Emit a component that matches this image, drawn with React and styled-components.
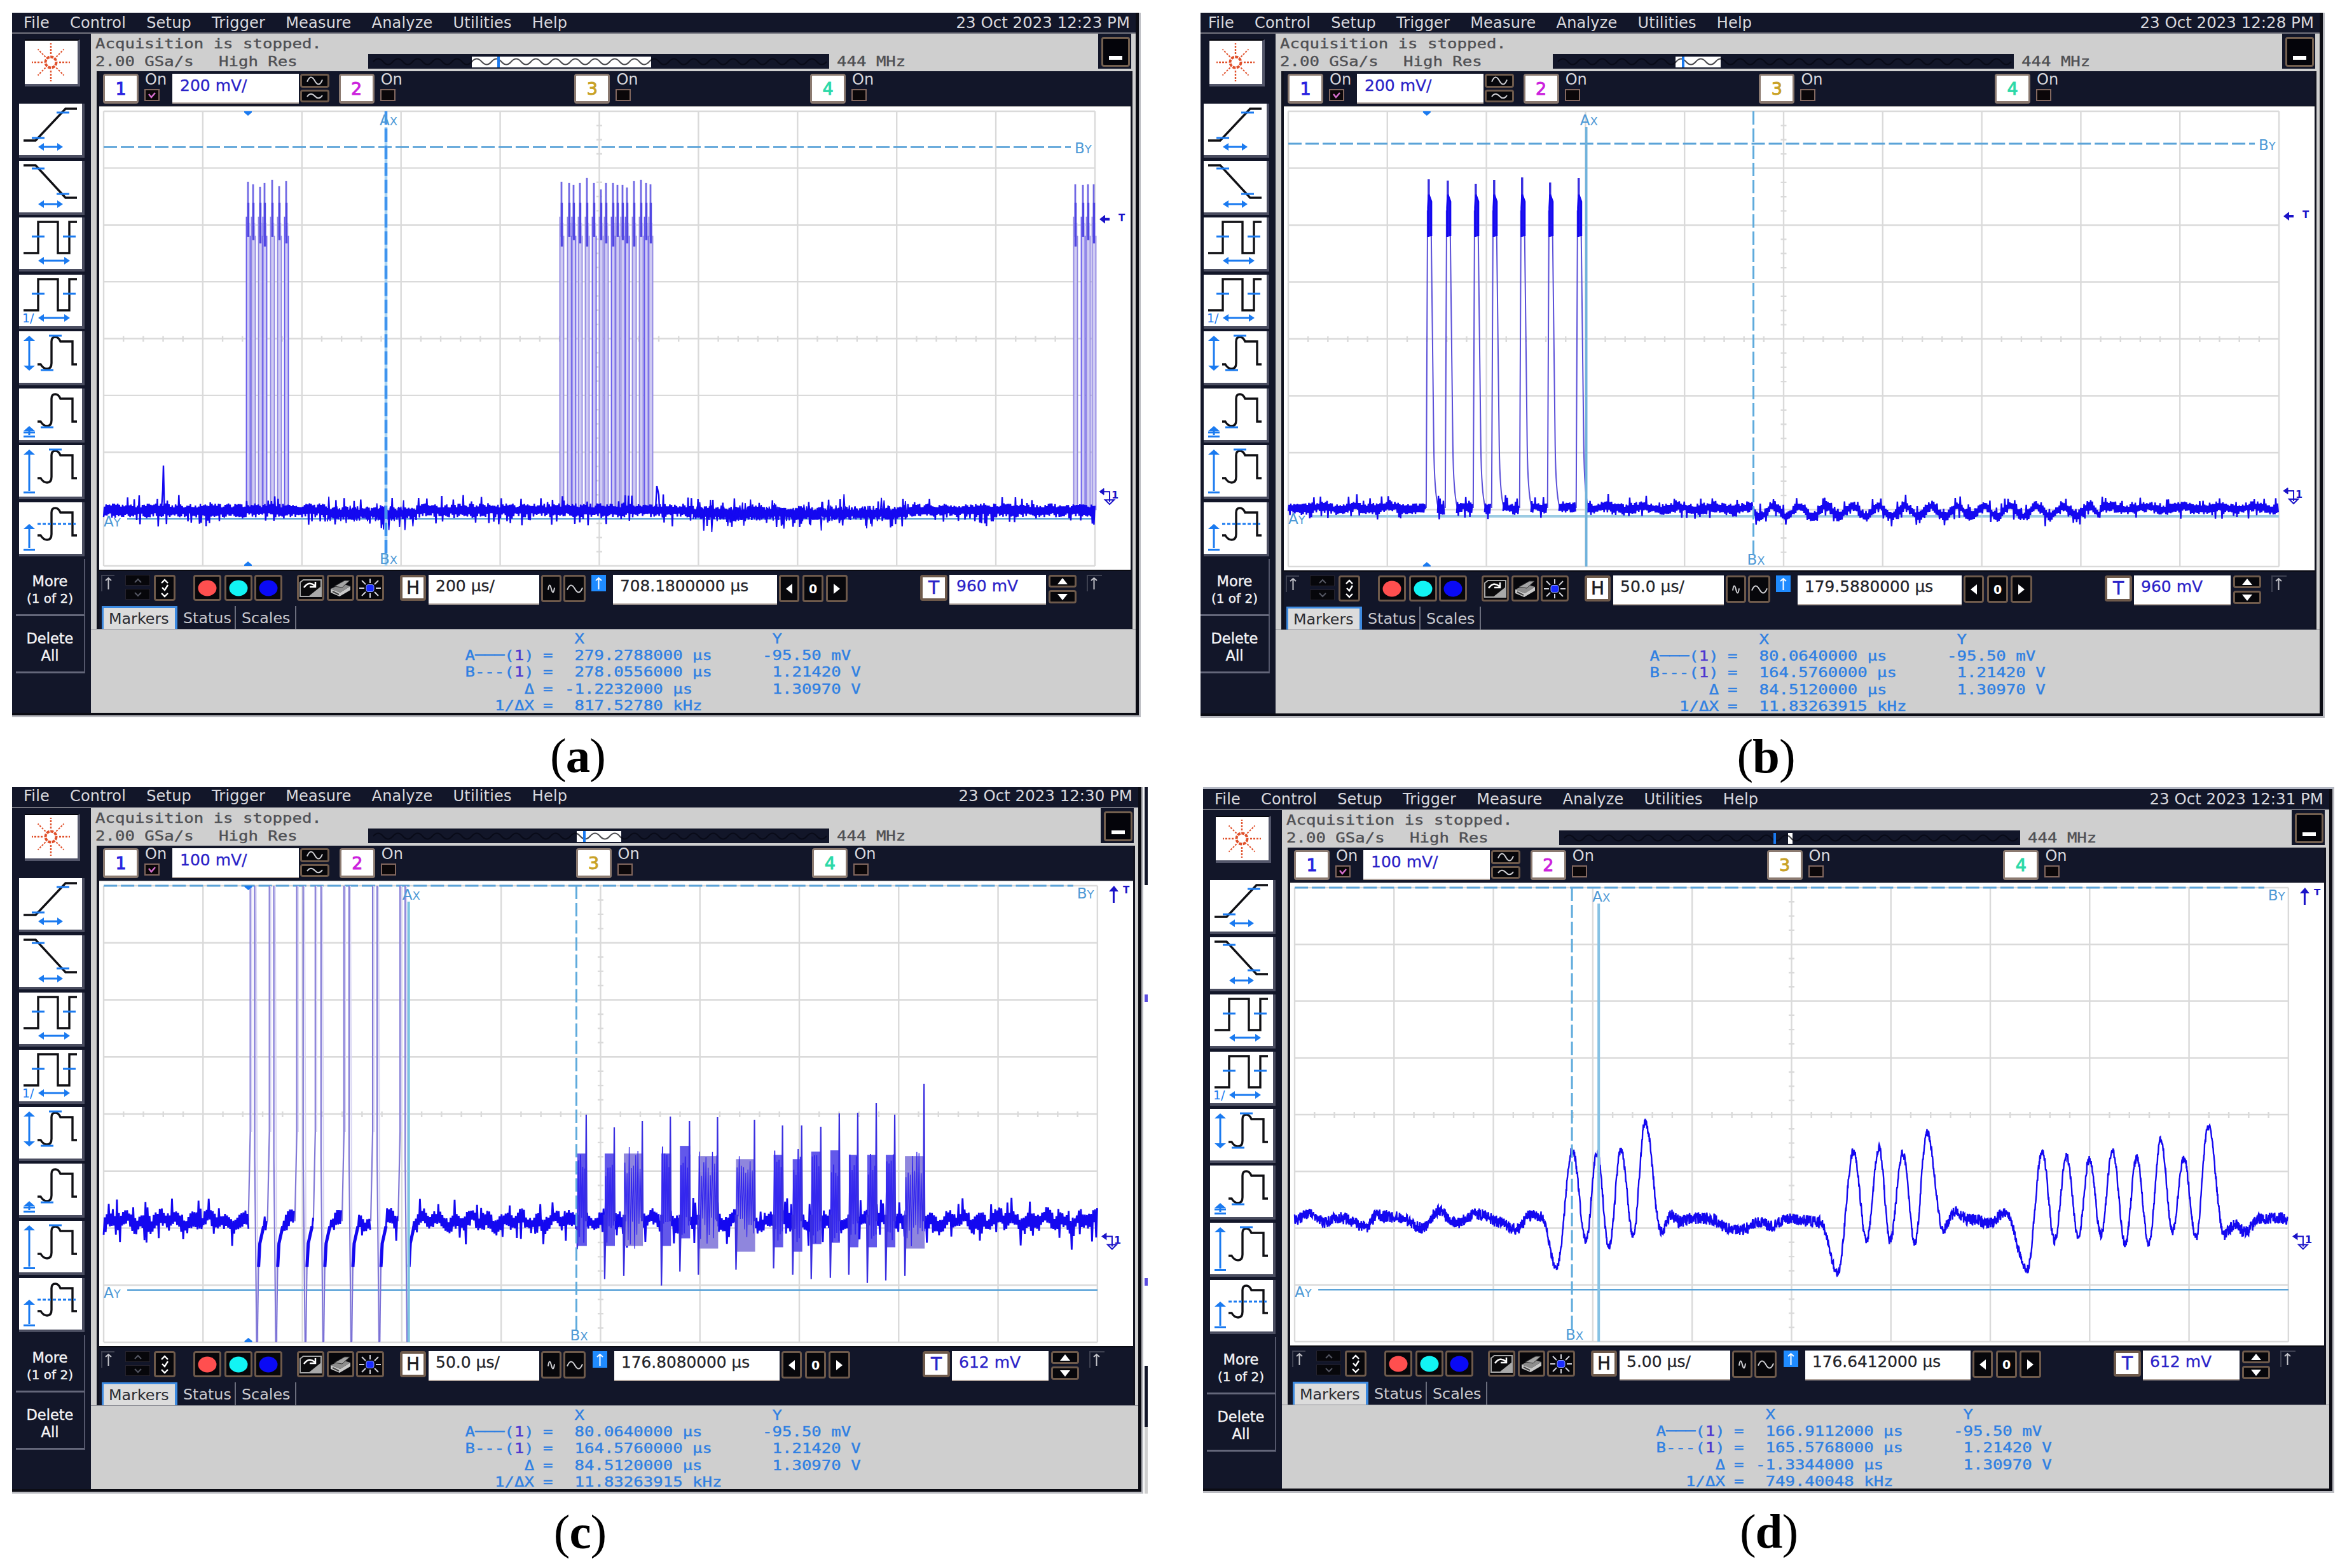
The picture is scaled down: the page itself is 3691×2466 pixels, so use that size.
import React from 'react'
import styled, { createGlobalStyle } from 'styled-components'

const NAVY = '#121629'
const GREY = '#cfcfcf'
const BLUE = '#1a7af0'
const TRACE = '#1408f0'

const GlobalStyle = createGlobalStyle`
  body {
    margin: 0;
    background: #fff;
  }
  * {
    box-sizing: border-box;
  }
`

const Page = styled.div`
  width: 3691px;
  height: 2466px;
  padding: 20px 0 0 19px;
  overflow: hidden;
  font-family: 'DejaVu Sans', Verdana, sans-serif;
`

const FigureRow = styled.div`
  display: flex;
  height: ${props => props.height}px;
`

const Figure = styled.div`
  width: ${props => props.width}px;
  margin-right: ${props => props.gap || 0}px;
`

const Caption = styled.div`
  padding-left: ${props => props.shift || 0}px;
  margin-top: 15px;
  text-align: center;
  font-family: 'Liberation Serif', 'Times New Roman', serif;
  font-size: 77px;
  line-height: 90px;
  letter-spacing: -1px;
  color: #000;
`

const ScreenRow = styled.div`
  display: flex;
  height: ${props => props.height}px;
`

const Screen = styled.div`
  width: ${props => props.width}px;
  height: 100%;
  border-right: 3px solid #b9bac0;
  border-bottom: 3px solid #b9bac0;
  border-top: ${props => (props.framed ? '3px solid #b4b8c4' : 'none')};
`

const Inner = styled.div`
  display: flex;
  flex-direction: column;
  height: 100%;
  border-right: 5px solid #0b0c14;
  border-bottom: 4px solid #0b0c14;
`

const MenuBar = styled.div`
  display: flex;
  align-items: center;
  justify-content: space-between;
  flex: none;
  height: 33px;
  padding: 0 9px ${props => props.lift || 0}px ${props => props.left}px;
  background: ${NAVY};
  border-bottom: 2px solid #74757f;
  color: #d9d9de;
  font-size: 24px;
  line-height: 28px;
  white-space: nowrap;
`

const Menus = styled.div`
  display: flex;
  gap: 32px;
  letter-spacing: 0.2px;
`

const Clock = styled.div`
  font-size: 24.5px;
`

const Body = styled.div`
  display: flex;
  flex: 1;
  min-height: 0;
`

const Sidebar = styled.div`
  display: flex;
  flex-direction: column;
  align-items: flex-end;
  flex: none;
  width: ${props => props.width}px;
  padding: 9px 9px 0 0;
  background: ${NAVY};
`

const LogoButton = styled.div`
  width: 87px;
  height: 74px;
  margin: 0 8px 27px 0;
  background: #fff;
  border-right: 4px solid #53566a;
  border-bottom: 4px solid #53566a;
  border-top: 2px solid #05060c;
`

const ToolButton = styled.div`
  width: 103px;
  height: 85px;
  margin: 0 1px ${props => (props.roomy ? 4.9 : 4.5)}px 0;
  background: #fff;
  border-right: 4px solid #4a4d60;
  border-bottom: 4px solid #4a4d60;
  flex: none;
`

const SideButton = styled.div`
  display: flex;
  flex-direction: column;
  align-items: center;
  justify-content: center;
  flex: none;
  width: 109px;
  height: 90px;
  padding-top: 10px;
  border-right: 2px solid #53566a;
  border-bottom: 3px solid #64677a;
  color: #f4f4f6;
  font-size: 22.5px;
  line-height: 27px;
  -webkit-text-stroke: 0.4px #f4f4f6;
`

const SmallText = styled.span`
  font-size: 20px;
`

const Main = styled.div`
  display: flex;
  flex-direction: column;
  flex: 1;
  min-width: 0;
  background: ${GREY};
`

const StatusArea = styled.div`
  display: flex;
  flex: none;
  height: 59px;
  padding-left: 7px;
`

const StatusText = styled.div`
  width: 429px;
  padding-top: 2px;
`

const Line = styled.div`
  display: flex;
  height: 27.5px;
  line-height: 27.5px;
`

const Mono = styled.span`
  display: inline-block;
  width: ${props => (props.width ? props.width + 'px' : 'auto')};
  font-family: 'DejaVu Sans Mono', monospace;
  font-size: 22px;
  white-space: pre;
  transform: scaleX(1.168);
  transform-origin: ${props => props.origin || 'left'} center;
  color: ${props => props.color || '#4f5054'};
  -webkit-text-stroke: 0.4px currentColor;
`

const MemoryBar = styled.div`
  width: 725px;
  height: 23px;
  margin-top: 32px;
  background: ${NAVY};
`

const Bandwidth = styled.div`
  flex: 1;
  padding: 30px 0 0 12px;
  line-height: 27px;
`

const MinimizeBox = styled.div`
  width: 52px;
  height: 55px;
  margin-right: 7px;
  padding: 5px 2px 3px 5px;
  background: ${NAVY};
`

const Minimize = styled.div`
  display: flex;
  align-items: flex-end;
  justify-content: center;
  height: 47px;
  padding-bottom: 8px;
  background: #04040a;
  border: 3px solid #74604f;
  border-radius: 4px;
`

const Dash = styled.div`
  width: 21px;
  height: 6px;
  background: #fff;
`

const Instrument = styled.div`
  display: flex;
  flex-direction: column;
  flex: 1;
  min-height: 0;
  margin: 0 5px 0 9px;
  border-left: 4px solid #10121f;
  border-right: 3px solid #10121f;
  background: ${NAVY};
`

const ChannelRow = styled.div`
  display: grid;
  grid-template-columns: repeat(4, ${props => (props.roomy ? 371.8 : 370.7)}px);
  flex: none;
  height: 55px;
  padding: 4px 0 0 6px;
`

const Channel = styled.div`
  display: flex;
  align-items: flex-start;
`

const ChannelButton = styled.div`
  width: 56px;
  height: 47px;
  margin-right: 10px;
  border: 3px solid #8b7a70;
  border-bottom-width: 4px;
  border-radius: 4px;
  background: #fff;
  color: ${props => props.color};
  font-size: 27px;
  line-height: 42px;
  text-align: center;
  -webkit-text-stroke: 1px ${props => props.color};
`

const OnBlock = styled.div`
  width: 43px;
  height: 47px;
  color: #d9d9de;
  font-size: 24px;
  line-height: 18px;
`

const Check = styled.div`
  width: 24px;
  height: 19px;
  margin-top: 6px;
  margin-left: -1px;
  border: 2px solid #83685f;
  background: #0b0709;
`

const Field = styled.div`
  width: ${props => props.width}px;
  height: 47px;
  margin-left: ${props => props.ml || 0}px;
  padding-left: ${props => props.pad || 11}px;
  background: #fff;
  border-bottom: 2px solid #b3a79f;
  color: ${props => props.color || '#24242a'};
  font-size: ${props => props.size || 25}px;
  line-height: ${props => props.line || 38}px;
  white-space: nowrap;
  -webkit-text-stroke: 0.3px currentColor;
`

const Stack = styled.div`
  display: flex;
  flex-direction: column;
  gap: ${props => props.gap || 3}px;
  width: ${props => props.width}px;
  margin-left: ${props => props.ml || 0}px;
`

const Key = styled.div`
  display: flex;
  align-items: center;
  justify-content: center;
  flex: none;
  width: ${props => props.width}px;
  height: ${props => props.height || 43}px;
  margin-left: ${props => props.ml || 0}px;
  border: ${props => (props.dim ? '1px solid #25222c' : '3px solid #6e5a4b')};
  border-radius: ${props => (props.dim ? 0 : 4)}px;
  background: #07070b;
  color: #fff;
  font-size: 19px;
  font-weight: bold;
`

const LetterKey = styled(Key)`
  height: 41px;
  border-width: 4px;
  background: #fff;
  color: ${props => props.color || '#1c1c20'};
  font-size: 28px;
  font-weight: normal;
  -webkit-text-stroke: 0.6px currentColor;
`

const Ghost = styled.div`
  width: ${props => props.width}px;
  height: 26px;
  margin-left: ${props => props.ml}px;
  border-left: 2px solid ${props => (props.lit ? '#1f8bff' : '#3d4050')};
  border-top: 2px solid ${props => (props.lit ? '#1f8bff' : '#3d4050')};
  background: ${props => (props.lit ? '#1f8bff' : 'transparent')};
`

const Toolbar = styled.div`
  display: flex;
  align-items: flex-start;
  flex: none;
  height: 57px;
  padding-top: 6px;
  border-top: 2px solid #0a0b12;
`

const Plot = styled.div`
  display: grid;
  flex: 1;
  min-height: 0;
  background: #fff;
  border-top: 1px solid #aaa;
`

const Chart = styled.svg`
  display: block;
  width: 100%;
  height: 100%;
`

const Tabs = styled.div`
  display: flex;
  flex: none;
  height: 36px;
  padding-left: 4px;
`

const Tab = styled.div`
  width: ${props => props.width}px;
  height: 36px;
  padding-left: ${props => (props.active ? 8 : 9)}px;
  background: ${props => (props.active ? '#dcdcdc' : 'transparent')};
  border: 0 solid ${props => (props.active ? '#3d8ae0' : '#6a6d7c')};
  border-width: ${props => (props.active ? '3px 4px 0 3px' : '0 2px 0 0')};
  color: ${props => (props.active ? '#2b2b30' : '#c9c9cf')};
  font-size: 23.8px;
  line-height: ${props => (props.active ? 34 : 38)}px;
`

const Readout = styled.div`
  display: grid;
  grid-template-columns: 697px 14px 34px 311px 1fr;
  grid-template-rows: repeat(5, 26.2px);
  flex: none;
  height: 132px;
  padding-top: 2px;
  line-height: 26px;
  border-top: 1px solid #8c8d94;
`

const Cell = styled.div`
  text-align: ${props => props.align || 'left'};
`

const EdgeStrip = styled.div`
  display: flex;
  flex-direction: column;
  width: 5px;
  margin-left: 2px;
`

const EdgePart = styled.div`
  height: ${props => props.size}px;
  background: ${props => props.color};
`

// small deterministic generator so the noise is the same on every paint
function makeRandom(seed) {
  let s = seed
  return () => {
    s = (s * 16807) % 2147483647
    return s / 2147483647
  }
}

function noise(seed, from, to, center, body, spike, step = 1.3) {
  const rnd = makeRandom(seed)
  let d = ''
  let up = false
  for (let x = from; x <= to; x += step) {
    const c = typeof center === 'function' ? center(x) : center
    const r = rnd()
    const amp = body * (0.4 + rnd() * 0.6) + (r > 0.82 ? rnd() * spike : 0)
    const y = c + (up ? -amp : amp)
    up = !up
    d += (d ? 'L' : 'M') + x.toFixed(1) + ' ' + y.toFixed(1)
  }
  return d
}

function smooth(points, seed) {
  const rnd = makeRandom(seed)
  let d = ''
  let i = 0
  for (let x = points[0][0]; x <= points[points.length - 1][0]; x += 0.5) {
    while (i < points.length - 2 && x > points[i + 1][0]) i++
    const [x0, y0] = points[i]
    const [x1, y1] = points[i + 1]
    const t = (1 - Math.cos(Math.PI * (x - x0) / (x1 - x0))) / 2
    const steep = Math.abs(y1 - y0) > 45
    const y = y0 + (y1 - y0) * t + (rnd() - 0.5) * (steep ? 13 : 19)
    d += (d ? 'L' : 'M') + x.toFixed(1) + ' ' + y.toFixed(1)
  }
  return d
}

const burstPulses = [
  [390, 285], [398, 289], [409, 293], [416, 287], [428, 282], [439, 292], [450, 284],
  [883, 285], [895, 287], [902, 290], [912, 287], [923, 279], [934, 287], [945, 297], [953, 287],
  [964, 287], [971, 290], [979, 290], [986, 294], [997, 284], [1008, 282], [1016, 287], [1023, 289],
  [1691, 289], [1703, 290], [1711, 289], [1720, 289],
]

function TraceA() {
  const sag = x => (x > 515 && x < 655) || (x > 1090 && x < 1427)
  return (
    <g fill="none" stroke={TRACE}>
      {burstPulses.map(([x, top], i) => (
        <g key={x}>
          <rect x={x - 2.5} y={350} width="6" height="452" fill="#d0ccf3" stroke="none" />
          <path d={`M${x - 2.5} 340V800M${x + 3.5} 370V802`} stroke={i % 3 ? '#8f86e2' : '#6558ec'} strokeWidth="1.8" />
          <path d={`M${x} ${top}V372`} stroke="#7068e4" strokeWidth="2.8" />
          <path d={`M${x + 0.5} 318V${372 + (i % 4) * 5}`} stroke="#5046e2" strokeWidth="3.4" />
        </g>
      ))}
      <path d={noise(7, 163, 1722, x => (sag(x) ? 807 : 802.5), 11, 15)} strokeWidth="2.4" />
      <path d={noise(37, 515, 655, 808, 13, 20, 2.1)} strokeWidth="1.8" />
      <path d={noise(57, 1090, 1427, 807, 13, 20, 2.1)} strokeWidth="1.8" />
      <path d="M254 800L256 770L257 732L258.500 800M1031 800L1033 764L1036 778L1037 800" strokeWidth="2.4" />
    </g>
  )
}

const pulsesB = [[384, 281], [414, 283], [458, 288], [487, 282], [531, 278], [575, 286], [620, 279]]

function TraceB() {
  const center = x => (x > 895 && x < 1441 ? 803 + 8 * Math.sin((x - 895) / 6.6) : 798 + 2 * Math.sin(x / 9))
  const edges = [163, ...pulsesB.flatMap(([x]) => [x - 5, x + 14]), 1722]
  const parts = []
  for (let i = 0; i < edges.length; i += 2) {
    parts.push(noise(11 + i, edges[i], edges[i + 1], center, 9, 12))
  }
  return (
    <g fill="none" stroke={TRACE}>
      {pulsesB.map(([x, top]) => (
        <g key={x}>
          <path d={`M${x - 4} 798L${x - 2} 380V330M${x + 4} 370L${x + 8} 700Q${x + 9} 775 ${x + 15} 797`} stroke="#5b50d8" strokeWidth="2" />
          <path d={`M${x} ${top}V320`} stroke="#3b30e0" strokeWidth="3.5" />
          <path d={`M${x - 1} 372V325L${x} 305L${x + 4} 316V370`} strokeWidth="3" fill="#2418ee" />
        </g>
      ))}
      {parts.map((d, i) => <path key={i} d={d} strokeWidth="2.4" />)}
    </g>
  )
}

// left and right edge of every clipped pulse
const pulsesC = [[392, 400], [422, 430], [465, 476], [494, 504], [539, 548], [584, 592], [627, 636]]

// start, end, body top, peak, dip
const burstsC = [
  [906, 921, 584, 533, 744], [949, 965, 584, 553, 791], [979, 1009, 584, 543, 786],
  [1038, 1053, 584, 536, 801], [1067, 1083, 572, 543, 779], [1096, 1127, 588, 537, 784],
  [1155, 1185, 593, 541, 776], [1214, 1229, 586, 550, 774], [1244, 1259, 593, 550, 784],
  [1273, 1289, 581, 552, 791], [1303, 1318, 579, 531, 789], [1332, 1347, 586, 530, 784],
  [1361, 1376, 586, 515, 797], [1390, 1405, 586, 533, 793], [1420, 1451, 588, 485, 786],
]

function TraceC() {
  const center = x => 700 + 5 * Math.sin(x / 4.1) + 4 * Math.sin(x / 11)
  const spans = [[163, 391], [648, 1722], ...pulsesC.slice(0, 6).map(([, r], i) => [r + 14, pulsesC[i + 1][0] - 2])]
  return (
    <g fill="none" stroke={TRACE}>
      {pulsesC.map(([l, r]) => (
        <g key={l}>
          <path d={`M${l + 1} 174V560L${l - 2} 700M${r} 174V600L${r + 3} 890`} stroke="#8279d6" strokeWidth="2.2" />
          <path d={`M${l + 3} 174V560M${r + 2} 174L${r + 5} 890`} stroke="#d8d5f2" strokeWidth="2" />
          <path d={`M${r + 4} 890L${r + 6} 770`} strokeWidth="2" stroke="#7a70d6" />
          <path d={`M${r + 6} 772L${r + 8} 735L${r + 14} 708`} strokeWidth="5" />
        </g>
      ))}
      {spans.map(([a, b], i) => <path key={a} d={noise(91 + i, a, b, center, 14, 26, 1.6)} strokeWidth="2.8" />)}
      {burstsC.map(([a, b, top, peak, dip], i) => (
        <g key={a}>
          <rect x={a} y={top + 10} width={b - a} height={145} fill={b - a > 20 ? '#8f86dd' : '#6258ea'} stroke="none" />
          <path d={noise(300 + i, a, b, 662, 76, 10, 1.7)} stroke="#3427ee" strokeWidth={b - a > 20 ? 1.3 : 1.8} />
          <path d={`M${b - 2} 700L${b - 1} ${peak}L${b} 700M${a - 1} 690L${a} ${dip}L${a + 2} 690`} strokeWidth="2.2" stroke="#3a2fe0" />
        </g>
      ))}
    </g>
  )
}

const pointsD = [
  [163, 699], [186, 687], [212, 702], [232, 694], [275, 709], [292, 691], [323, 693], [364, 711],
  [389, 684], [415, 703], [450, 689], [484, 701], [510, 713], [533, 691], [550, 694], [574, 773],
  [599, 588], [620, 731], [637.5, 591], [656, 742], [675, 587], [694, 723], [713, 543], [738, 716],
  [754, 691], [768, 701], [788, 695], [816, 696], [842, 711], [868, 712], [891, 702], [912, 708],
  [937, 695], [988, 702], [1015, 781], [1040, 589], [1060, 731], [1080, 584], [1097, 731],
  [1117, 593], [1136, 734], [1155, 560], [1180, 712], [1200, 686], [1218, 697], [1255, 702],
  [1278, 685], [1312, 776], [1336, 590], [1355, 731], [1374, 597], [1392, 724], [1410, 602],
  [1428, 721], [1446, 588], [1466, 736], [1484, 600], [1503, 736], [1522, 571], [1540, 716],
  [1558, 601], [1577, 728], [1596, 550], [1621, 721], [1639, 704], [1653, 717], [1678, 696], [1721, 695],
]

function TraceD() {
  return <path d={smooth(pointsD, 5)} fill="none" stroke={TRACE} strokeWidth="2.4" />
}

function Grid() {
  const lines = []
  for (let i = 0; i <= 10; i++) {
    lines.push(`M${163 + i * 155.9} 174V890`)
    for (let k = 1; k < 5 && i < 10; k++) lines.push(`M${163 + (i + k / 5) * 155.9} 528V537`)
  }
  for (let i = 0; i <= 8; i++) {
    lines.push(`M163 ${174 + i * 89.5}H1722`)
    for (let k = 1; k < 4 && i < 8; k++) lines.push(`M938 ${174 + (i + k / 4) * 89.5}H947`)
  }
  return <path d={lines.join('')} stroke="#dadada" strokeWidth="2.4" fill="none" />
}

function Marker({ x, y, letter, axis }) {
  return (
    <text x={x} y={y} fill="#4f9ad6" fontFamily="DejaVu Sans" fontSize="23">
      {letter}<tspan fontSize="18">{axis}</tspan>
    </text>
  )
}

function ScopePlot({ data }) {
  const { Trace, ax, bx, ay, by, trigger, level, tick } = data
  return (
    <Plot>
      <Chart viewBox="156 167 1622 729" preserveAspectRatio="none">
        <Grid />
        <path d={`M200 ${ay}H1722`} stroke={data.ayWide ? '#9ccbe2' : '#5ba3d8'} strokeWidth={data.ayWide ? 4 : 2.4} />
        <Marker x={163} y={ay + 12} letter="A" axis="Y" />
        <path d={`M163 ${by}H1684`} stroke="#5ba3d8" strokeWidth="2.8" strokeDasharray="21 6" />
        <Marker x={1690} y={by === 174 ? 194 : by + 10} letter="B" axis="Y" />
        <Trace />
        <path d={`M${ax} 199V890`} stroke={data.axColor} strokeWidth={data.axWidth} />
        <path d={`M${bx} 174V876`} stroke={data.overlap ? '#3f94ee' : '#5fabdc'} strokeWidth={data.overlap ? 4.5 : 3} strokeDasharray="21 6" />
        <Marker x={ax - 10} y={196} letter="A" axis="X" />
        <Marker x={bx - 10} y={887} letter="B" axis="X" />
        {tick && <path d={`M${tick - 6} 174h12v2l-6 5l-6 -5zM${tick - 6} 890h12v-2l-6 -5l-6 5z`} fill={BLUE} />}
        {trigger ? (
          <g fill="#1a12c8">
            <path d={`M1729 ${trigger}l9 -7v5h7v4h-7v5z`} />
            <text x="1759" y={trigger + 3} fontFamily="DejaVu Sans" fontWeight="bold" fontSize="15">T</text>
          </g>
        ) : (
          <g fill="#1a12c8">
            <path d="M1748 174l-8 9h6v18h3v-18h6z" />
            <text x="1762" y="186" fontFamily="DejaVu Sans" fontWeight="bold" fontSize="15">T</text>
          </g>
        )}
        <g fill="#1a12c8" stroke="#1a12c8">
          <path d={`M1729 ${level}l7 -5v10z`} />
          <path d={`M1736 ${level}h9v16M1738 ${level + 13}h14l-7 7z`} fill="none" strokeWidth="2" />
          <text x="1748" y={level + 11} fontFamily="DejaVu Sans" fontWeight="bold" fontSize="16" stroke="none">1</text>
        </g>
      </Chart>
    </Plot>
  )
}

function Logo() {
  const rays = [0, 45, 90, 135, 180, 225, 270, 315]
  return (
    <svg width="83" height="68" viewBox="0 0 83 68">
      <g fill="none" stroke="#e0502a">
        <circle cx="41" cy="34" r="8.500" strokeWidth="4" strokeDasharray="5 1.500" />
        {rays.map(a => (
          <path key={a} d={a % 90 ? 'M53 34h17' : 'M54 34h17'} strokeWidth={a % 90 ? 2 : 2.4} strokeDasharray="3 2"
            transform={`rotate(${a} 41 34)`} />
        ))}
      </g>
    </svg>
  )
}

const HArrow = ({ from, to, y }) => (
  <g fill={BLUE} stroke="none">
    <path d={`M${from} ${y}l9 -6v12zM${to} ${y}l-9 -6v12z`} />
    <rect x={from + 5} y={y - 1.5} width={to - from - 10} height="3" />
  </g>
)

const VArrow = ({ from, to, both }) => (
  <g fill={BLUE} stroke="none">
    <path d={`M16 ${from}l-9 8h18z`} />
    {both ? <path d={`M16 ${to}l-9 -8h18z`} /> : <rect x="7" y={to - 2} width="18" height="3" />}
    <rect x="14.500" y={from + 5} width="3" height={to - from - 8} />
  </g>
)

const StepShape = () => <path d="M29 52h5q4 7 10 7q7 0 7 -9V16q0 -7 6 -7q5 0 8 7h19v36h7" />

function ToolIcon({ kind }) {
  return (
    <svg width="99" height="81" viewBox="0 0 99 81">
      <g fill="none" stroke="#101014" strokeWidth="3.400">
        {kind === 'rise' && <path d="M7 58h19L73 8h18" />}
        {kind === 'fall' && <path d="M7 7h19L73 58h18" />}
        {(kind === 'width' || kind === 'freq') && <path d="M7 56h23V7h31v49h18V7h12" />}
        {['pp', 'base', 'top', 'avg'].includes(kind) && <StepShape />}
      </g>
      <g fill="none" stroke={BLUE} strokeWidth="3">
        {kind === 'rise' && <path d="M20 54h20M59 14h20" />}
        {kind === 'fall' && <path d="M20 12h20M59 52h20" />}
        {(kind === 'width' || kind === 'freq') && <path d="M20 30h20M69 30h20" />}
        {(kind === 'pp' || kind === 'top') && <path d="M47 7h20" />}
        {(kind === 'pp' || kind === 'base') && <path d="M34 61h20" />}
        {kind === 'base' && <path d="M7 69h18" />}
        {kind === 'avg' && <path d="M29 34h60" strokeDasharray="5 3" />}
      </g>
      {(kind === 'rise' || kind === 'fall') && <HArrow from={30} to={69} y={68} />}
      {(kind === 'width' || kind === 'freq') && <HArrow from={30} to={80} y={68} />}
      {kind === 'freq' && <text x="5" y="75" fill={BLUE} fontFamily="DejaVu Sans" fontSize="19">1/</text>}
      {kind === 'pp' && <VArrow from={7} to={62} both />}
      {kind === 'base' && <VArrow from={59} to={76} />}
      {kind === 'top' && <VArrow from={7} to={75} />}
      {kind === 'avg' && <VArrow from={34} to={75} />}
    </svg>
  )
}

const tools = ['rise', 'fall', 'width', 'freq', 'pp', 'base', 'top', 'avg']

function Wave({ big, narrow }) {
  const w = narrow ? 12 : 26
  const h = big ? 5 : 3
  return (
    <svg width={w} height="16" viewBox={`0 0 ${w} 16`}>
      <path d={`M1 ${8 + h / 3}Q${w / 4} ${8 - h * 2.4} ${w / 2} 8T${w - 1} ${8 - h / 3}`} fill="none" stroke="#d0d0d4" strokeWidth="2" />
    </svg>
  )
}

function Arrow({ dir, color = '#fff' }) {
  const shape = { up: 'M8 2L16 12H0z', down: 'M8 12L16 2H0z', left: 'M3 7L13 -1V15z', right: 'M13 7L3 -1V15z' }[dir]
  return <svg width="18" height="16" viewBox="0 -1 16 16"><path d={shape} fill={color} /></svg>
}

function Chevron({ up }) {
  return (
    <svg width="14" height="8" viewBox="0 0 14 8">
      <path d={up ? 'M2 7L7 2L12 7' : 'M2 1L7 6L12 1'} fill="none" stroke="#555763" strokeWidth="2" />
    </svg>
  )
}

const MarkSvg = styled.svg`
  display: block;
`

function UpMark({ color }) {
  return (
    <MarkSvg width="18" height="22" viewBox="0 0 18 22">
      <path d="M9.500 21V4M5 7L9.500 3L14 7" fill="none" stroke={color} strokeWidth="2" />
    </MarkSvg>
  )
}

function Dot({ color }) {
  return <svg width="32" height="28" viewBox="0 0 32 28"><ellipse cx="16" cy="14" rx="14.500" ry="12.500" fill={color} /></svg>
}

function MemoryWave({ memory }) {
  const [from, to, mark] = memory
  let d = 'M8 12'
  for (let x = 8; x < 710; x += 31) d += `q7.750 -9 15.500 0t15.500 0`
  return (
    <svg width="725" height="23" viewBox="0 0 725 23">
      <path d={d} fill="none" stroke="#090b18" strokeWidth="2" />
      <svg x={from} y="4" width={to - from} height="17" viewBox={`${from} 4 ${to - from} 17`}>
        <rect x={from} y="4" width={to - from} height="17" fill="#fff" />
        <path d={d} fill="none" stroke="#4a4a4e" strokeWidth="2" />
      </svg>
      <rect x={mark - 2} y="4" width="4" height="17" fill={BLUE} />
    </svg>
  )
}

function Channels({ scale, roomy }) {
  const colors = ['#2a1fe0', '#cc22dd', '#c9a227', '#2bd9a8']
  return (
    <ChannelRow roomy={roomy}>
      {colors.map((color, i) => (
        <Channel key={color}>
          <ChannelButton color={color}>{i + 1}</ChannelButton>
          <OnBlock>
            On
            <Check>
              {i === 0 && (
                <MarkSvg width="20" height="15" viewBox="0 0 20 15">
                  <path d="M5 6L9 11L15 4" fill="none" stroke="#d86fd0" strokeWidth="2.500" />
                </MarkSvg>
              )}
            </Check>
          </OnBlock>
          {i === 0 && <Field width={199} pad={12} color="#2a22c8">{scale}</Field>}
          {i === 0 && (
            <Stack width={46} ml={2}>
              <Key width={46} height={22}><Wave big /></Key>
              <Key width={46} height={20}><Wave /></Key>
            </Stack>
          )}
        </Channel>
      ))}
    </ChannelRow>
  )
}

function HorizontalBar({ data }) {
  const extra = data.roomy ? 2 : 0
  return (
    <Toolbar>
      <Ghost width={21} ml={3}><UpMark color="#c4c4ca" /></Ghost>
      <Stack width={39} ml={17} gap={5}>
        <Key dim width={39} height={17}><Chevron up /></Key>
        <Key dim width={39} height={17}><Chevron /></Key>
      </Stack>
      <Key width={34} ml={6} height={41}>
        <svg width="16" height="32" viewBox="0 0 16 32">
          <path d="M3 8L8 3L13 8M3 24L8 29L13 24M4 15L8 19L13 11" fill="none" stroke="#fff" strokeWidth="2.400" />
        </svg>
      </Key>
      <Key width={44} ml={28} height={41}><Dot color="#ff4f4f" /></Key>
      <Key width={44} ml={5} height={41}><Dot color="#12f4f4" /></Key>
      <Key width={44} ml={3} height={41}><Dot color="#0a0af5" /></Key>
      <Key width={43} ml={23} height={41}>
        <svg width="35" height="30" viewBox="0 0 35 30">
          <path d="M1 28V6L6 2H34V28z" fill="#0a0a0c" stroke="#a9a9a9" strokeWidth="2" />
          <path d="M34 12V28H14z" fill="#a9a9a9" />
          <path d="M7 14Q15 3 24 11M25 5V13H16" fill="none" stroke="#fff" strokeWidth="2.500" />
        </svg>
      </Key>
      <Key width={43} ml={4} height={41}>
        <svg width="35" height="30" viewBox="0 0 35 30">
          <path d="M2 16L20 8L33 12L17 22z" fill="#8d8d8d" />
          <path d="M2 16V22L16 28L33 18V12L17 22z" fill="#c9c9c9" />
          <path d="M8 12L24 3L32 3L20 14z" fill="#a5a5a5" stroke="#333" />
          <path d="M5 20L15 25" stroke="#444" strokeWidth="2" />
        </svg>
      </Key>
      <Key width={44} ml={3} height={41}>
        <svg width="36" height="32" viewBox="0 0 36 32">
          <g stroke="#d5d5dc" strokeWidth="2">
            <path d="M18 1V8M18 24V31M1 16H9M27 16H35M5 4L11 10M25 22L31 28M31 4L25 10M11 22L5 28" />
          </g>
          <rect x="12" y="10.500" width="12" height="11" rx="3" fill="#1a2cff" stroke="#8fa0ff" />
        </svg>
      </Key>
      <LetterKey width={41} ml={25}>H</LetterKey>
      <Field width={174} ml={4} line={36}>{data.timebase}</Field>
      <Key width={32} ml={3}><Wave big narrow /></Key>
      <Key width={35} ml={3}><Wave big /></Key>
      <Ghost width={23} ml={9 + extra} lit><UpMark color="#fff" /></Ghost>
      <Field width={258 + extra} ml={11} size={24.8} line={36}>{data.delay}</Field>
      <Key width={32} ml={3}><Arrow dir="left" /></Key>
      <Key width={33} ml={5}>0</Key>
      <Key width={34} ml={4}><Arrow dir="right" /></Key>
      <LetterKey width={43} ml={114} color="#2a22c8">T</LetterKey>
      <Field width={152} ml={3} line={36} color="#2a22c8">{data.level}</Field>
      <Stack width={44} ml={4} gap={4}>
        <Key width={44} height={20}><Arrow dir="up" /></Key>
        <Key width={44} height={21}><Arrow dir="down" /></Key>
      </Stack>
      <Ghost width={24} ml={16}><UpMark color="#c4c4ca" /></Ghost>
    </Toolbar>
  )
}

const SourceNumber = styled.span`
  color: #4b35d0;
`

function MarkerReadout({ rows }) {
  const blue = '#2f80e2'
  return (
    <Readout>
      <Cell /><Cell /><Cell />
      <Cell><Mono color={blue}> X</Mono></Cell>
      <Cell><Mono color={blue}> Y</Mono></Cell>
      {rows.map(([label, x, y]) => (
        <React.Fragment key={label}>
          <Cell align="right">
            <Mono color={blue} origin="right">
              {label === 'A' || label === 'B' ? (
                <>
                  {label}{label === 'A' ? '───' : '---'}(<SourceNumber>1</SourceNumber>)
                </>
              ) : label}
            </Mono>
          </Cell>
          <Cell />
          <Cell><Mono color={blue}>=</Mono></Cell>
          <Cell><Mono color={blue}>{x}</Mono></Cell>
          <Cell><Mono color={blue}>{y}</Mono></Cell>
        </React.Fragment>
      ))}
    </Readout>
  )
}

function Scope({ data }) {
  const side = data.side || 124
  return (
    <Screen width={data.width} framed={data.framed}>
      <Inner>
        <MenuBar left={side - 106} lift={data.lift}>
          <Menus>
            {['File', 'Control', 'Setup', 'Trigger', 'Measure', 'Analyze', 'Utilities', 'Help'].map(m => (
              <span key={m}>{m}</span>
            ))}
          </Menus>
          <Clock>{data.clock}</Clock>
        </MenuBar>
        <Body>
          <Sidebar width={side}>
            <LogoButton><Logo /></LogoButton>
            {tools.map(kind => <ToolButton key={kind} roomy={data.roomy}><ToolIcon kind={kind} /></ToolButton>)}
            <SideButton>
              <span>More</span>
              <SmallText>(1 of 2)</SmallText>
            </SideButton>
            <SideButton>
              <span>Delete</span>
              <span>All</span>
            </SideButton>
          </Sidebar>
          <Main>
            <StatusArea>
              <StatusText>
                <Line><Mono>Acquisition is stopped.</Mono></Line>
                <Line>
                  <Mono width={194}>2.00 GSa/s</Mono>
                  <Mono>High Res</Mono>
                </Line>
              </StatusText>
              <MemoryBar><MemoryWave memory={data.memory} /></MemoryBar>
              <Bandwidth><Mono>444 MHz</Mono></Bandwidth>
              <MinimizeBox><Minimize><Dash /></Minimize></MinimizeBox>
            </StatusArea>
            <Instrument>
              <Channels scale={data.scale} roomy={data.roomy} />
              <ScopePlot data={data.plot} />
              <HorizontalBar data={data} />
              <Tabs>
                <Tab active width={119}>Markers</Tab>
                <Tab width={92}>Status</Tab>
                <Tab width={95}>Scales</Tab>
              </Tabs>
            </Instrument>
            <MarkerReadout rows={data.rows} />
          </Main>
        </Body>
      </Inner>
    </Screen>
  )
}

const scopes = {
  a: {
    width: 1775, clock: '23 Oct 2023 12:23 PM', scale: '200 mV/', memory: [163, 445, 205],
    timebase: '200 µs/', delay: '708.1800000 µs', level: '960 mV',
    plot: { Trace: TraceA, ax: 607, bx: 607, ay: 816, by: 230.5, trigger: 344, level: 773, tick: 390, axColor: '#a9d4f4', axWidth: 4.5, overlap: true },
    rows: [['A', ' 279.2788000 µs', '-95.50 mV'], ['B', ' 278.0556000 µs', ' 1.21420 V'], ['Δ', '-1.2232000 µs', ' 1.30970 V'], ['1/ΔX', ' 817.52780 kHz', '']],
  },
  b: {
    width: 1768, side: 118, clock: '23 Oct 2023 12:28 PM', scale: '200 mV/', memory: [193, 264, 205],
    timebase: '50.0 µs/', delay: '179.5880000 µs', level: '960 mV',
    plot: { Trace: TraceB, ax: 632, bx: 895, ay: 811, by: 225, trigger: 339, level: 771, tick: 381, axColor: '#6fb2dc', axWidth: 3.6, ayWide: true },
    rows: [['A', ' 80.0640000 µs', '-95.50 mV'], ['B', ' 164.5760000 µs', ' 1.21420 V'], ['Δ', ' 84.5120000 µs', ' 1.30970 V'], ['1/ΔX', ' 11.83263915 kHz', '']],
  },
  c: {
    width: 1779, roomy: true, lift: 3, clock: '23 Oct 2023 12:30 PM', scale: '100 mV/', memory: [328, 398, 340],
    timebase: '50.0 µs/', delay: '176.8080000 µs', level: '612 mV',
    plot: { Trace: TraceC, ax: 641.5, bx: 904.6, ay: 808, by: 174, level: 724, tick: 390, axColor: '#7cc4e0', axWidth: 4 },
    rows: [['A', ' 80.0640000 µs', '-95.50 mV'], ['B', ' 164.5760000 µs', ' 1.21420 V'], ['Δ', ' 84.5120000 µs', ' 1.30970 V'], ['1/ΔX', ' 11.83263915 kHz', '']],
  },
  d: {
    width: 1779, roomy: true, framed: true, clock: '23 Oct 2023 12:31 PM', scale: '100 mV/', memory: [360, 367, 339],
    timebase: '5.00 µs/', delay: '176.6412000 µs', level: '612 mV',
    plot: { Trace: TraceD, ax: 640, bx: 598, ay: 808, by: 174, level: 724, axColor: '#86c2e4', axWidth: 4 },
    rows: [['A', ' 166.9112000 µs', '-95.50 mV'], ['B', ' 165.5768000 µs', ' 1.21420 V'], ['Δ', '-1.3344000 µs', ' 1.30970 V'], ['1/ΔX', ' 749.40048 kHz', '']],
  },
}

export default function App() {
  return (
    <Page>
      <GlobalStyle />
      <FigureRow height={1218}>
        <Figure width={1775} gap={94}>
          <ScreenRow height={1108}><Scope data={scopes.a} /></ScreenRow>
          <Caption shift={4}>(<b>a</b>)</Caption>
        </Figure>
        <Figure width={1768}>
          <ScreenRow height={1109}><Scope data={scopes.b} /></ScreenRow>
          <Caption shift={10}>(<b>b</b>)</Caption>
        </Figure>
      </FigureRow>
      <FigureRow height={1220}>
        <Figure width={1786} gap={87}>
          <ScreenRow height={1111}>
            <Scope data={scopes.c} />
            <EdgeStrip>
              <EdgePart size={154} color={NAVY} />
              <EdgePart size={172} color="#fff" />
              <EdgePart size={12} color="#5a4be0" />
              <EdgePart size={434} color="#fff" />
              <EdgePart size={12} color="#5a4be0" />
              <EdgePart size={126} color="#fff" />
              <EdgePart size={96} color={NAVY} />
              <EdgePart size={105} color={GREY} />
            </EdgeStrip>
          </ScreenRow>
          <Caption>(<b>c</b>)</Caption>
        </Figure>
        <Figure width={1779}>
          <ScreenRow height={1110}><Scope data={scopes.d} /></ScreenRow>
          <Caption>(<b>d</b>)</Caption>
        </Figure>
      </FigureRow>
    </Page>
  )
}
